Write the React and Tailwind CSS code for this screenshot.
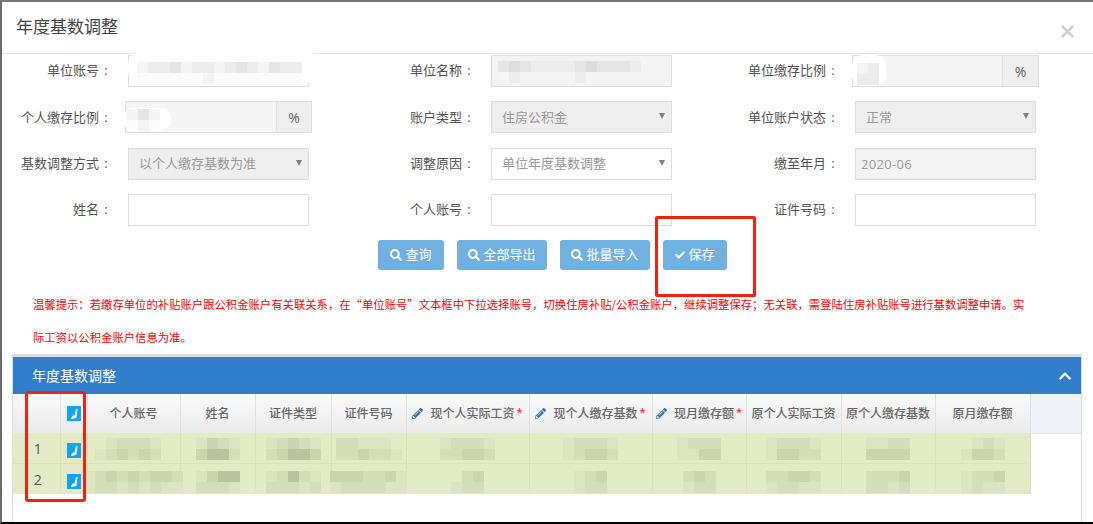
import React from 'react';
import { FaSearch, FaCheck, FaPencilAlt, FaChevronUp } from 'react-icons/fa';

const FONT = "font-['Open_Sans','Noto_Sans_CJK_SC',sans-serif]";

const GREEN = { 0: 'bg-[#e2ebc6]', 1: 'bg-[#dbe4c0]', 2: 'bg-[#d3ddb9]', 3: 'bg-[#cad4b1]', 4: 'bg-[#b9c3a2]' };
const GREY = { 0: 'bg-[#fbfbfb]', 1: 'bg-[#f4f4f4]', 2: 'bg-[#ececec]', 3: 'bg-[#e5e5e5]', 4: 'bg-[#dcdcdc]' };

function Mosaic({ rows, tones = GREEN }) {
  return (
    <div className="flex flex-col">
      {rows.map((row, i) => (
        <div key={i} className="flex">
          {row.split('').map((c, j) => (
            <div key={j} className={`h-[11px] w-[11px] shrink-0 ${tones[c]}`} />
          ))}
        </div>
      ))}
    </div>
  );
}

function Caret() {
  return (
    <svg className="pointer-events-none absolute right-[7px] top-[12px]" width="6" height="6" viewBox="0 0 6 6">
      <path d="M0 0h6L3 6z" fill="#808080" />
    </svg>
  );
}

function Field({ label, children }) {
  return (
    <div className="flex h-[32px] items-center">
      <label className="flex w-[111px] shrink-0 justify-end whitespace-nowrap text-[13px] text-[#555]">
        {label}
        <span className="w-[14px] text-center">:</span>
      </label>
      <div className="relative ml-[15px] h-[32px] w-[181px] shrink-0">{children}</div>
    </div>
  );
}

function TextBox({ value = '', muted }) {
  return (
    <input
      readOnly
      value={value}
      className={`h-full w-full border border-[#ddd] pl-[5px] text-[13px] tracking-[0.3px] text-[#999] outline-none ${muted ? 'bg-[#f3f3f3]' : 'bg-white'}`}
    />
  );
}

function SelectBox({ value, enabled }) {
  return (
    <>
      <div className={`flex h-full w-full items-center border border-[#ddd] px-[10px] text-[13px] text-[#999] ${enabled ? 'bg-white' : 'bg-[#eeeeee]'}`}>
        {value}
      </div>
      <Caret />
    </>
  );
}

function PercentBox({ children, addonWidth }) {
  return (
    <div className="absolute -left-[3px] top-0 flex h-full w-[187px] border border-[#ddd] bg-[#f5f5f5]">
      <div className="relative flex-1">{children}</div>
      <div className={`flex items-center justify-center border-l border-[#ddd] bg-[#eeeeee] text-[14px] text-[#666] ${addonWidth}`}>%</div>
    </div>
  );
}

function ActionButton({ icon, children, width }) {
  return (
    <button className={`flex h-[30px] items-center justify-center gap-[3px] rounded-[3px] bg-[#6fb1e0] text-[13px] text-white ${width}`}>
      {icon}
      {children}
    </button>
  );
}

function Check() {
  return (
    <div className="flex h-[15px] w-[14px] items-center justify-center bg-[#12a5f4]">
      <svg width="14" height="15" viewBox="0 0 14 15">
        <path d="M4 12 L6 9.5 L7.5 9.5 L9 3 L10.5 3 L9.5 11.5 L7 12.5 L4.5 13 Z" fill="#fff" />
      </svg>
    </div>
  );
}

function HeadCell({ children, edit, required }) {
  return (
    <th className="h-[39px] whitespace-nowrap border-r border-[#e0e0e0] bg-gradient-to-b from-[#f9f9f9] to-[#ebebeb] p-0 text-center text-[12px] font-medium text-[#666]">
      <div className="flex items-center justify-center">
        {edit && <FaPencilAlt className="mr-[7px] text-[11px] text-[#337ab7]" />}
        {children}
        {required && <span className="ml-[2px] -mt-[3px] text-[11px] text-[#f00]">*</span>}
      </div>
    </th>
  );
}

const ROW_PATCHES = [
  [
    ['0122210', '1232320'],
    ['1321', '3442'],
    ['12321', '23443'],
    ['221110', '223221'],
    ['12221', '22332'],
    ['12221', '12332'],
    ['1222', '1133'],
    ['12221', '13322'],
    ['1122', '3333'],
    ['0121', '1332'],
  ],
  [
    ['123232332', '122121211'],
    ['1344', '2221'],
    ['12421', '22212'],
    ['3332231', '1222211'],
    ['023', '122'],
    ['123', '122'],
    ['232', '122'],
    ['22332', '12211'],
    ['2223', '2212'],
    ['1223', '1211'],
  ],
];

function DataRow({ no, patches, last }) {
  const td = `border-r border-[#d8e1bc] p-0 ${last ? 'h-[31px]' : 'h-[30px] border-b'}`;
  return (
    <tr className="bg-[#e2ebc6]">
      <td className={`${td} pt-[2px] text-center text-[14px] text-[#555]`}>
        <span className="ml-[3px]">{no}</span>
      </td>
      <td className={td}>
        <div className="flex justify-center pt-[5px]"><Check /></div>
      </td>
      {patches.map((rows, i) => (
        <td key={i} className={td}>
          <div className={`flex justify-center ${last ? 'pt-[7px]' : 'pt-[3px]'}`}>
            <Mosaic rows={rows} />
          </div>
        </td>
      ))}
    </tr>
  );
}

export default function App() {
  return (
    <div className={`relative h-[524px] w-[1093px] overflow-hidden border-b-2 border-l-2 border-t-2 border-b-black border-l-[#6b6b6b] border-t-[#777] bg-white ${FONT}`}>
      {/* header */}
      <div className="flex h-[52px] items-center justify-between border-b border-[#e5e5e5] pl-[14px] pr-[18px]">
        <h4 className="-mt-[2px] text-[17px] font-normal text-[#444]">年度基数调整</h4>
        <svg className="mt-[8px]" width="15" height="15" viewBox="0 0 16 16">
          <path d="M2 2 14 14M14 2 2 14" stroke="#cfcfcf" strokeWidth="3" />
        </svg>
      </div>

      {/* form */}
      <div className="grid grid-cols-[363px_364px_363px] gap-y-[14.4px] pt-[1px]">
        <Field label="单位账号">
          <TextBox />
          <div className="absolute -top-[3px] left-0 h-[31px] w-[192px] rounded-[12px] bg-white" />
          <div className="absolute left-[9px] top-[7px]">
            <Mosaic tones={GREY} rows={['122312212321322', '000000100000000']} />
          </div>
        </Field>
        <Field label="单位名称">
          <TextBox muted />
          <div className="absolute left-[7px] top-[6px]">
            <Mosaic tones={{ ...GREY, 0: 'bg-[#f3f3f3]' }} rows={['3432222343332', '1211111211111']} />
          </div>
        </Field>
        <Field label="单位缴存比例">
          <PercentBox addonWidth="w-[36px]">
            <div className="absolute -top-[1px] left-[-1px] h-[31px] w-[34px] rounded-[10px] bg-white" />
            <div className="absolute left-[4px] top-[7px]">
              <Mosaic tones={GREY} rows={['12', '22']} />
            </div>
          </PercentBox>
        </Field>

        <Field label="个人缴存比例">
          <PercentBox addonWidth="w-[35px]">
            <div className="absolute left-[-3px] top-[6px] h-[22px] w-[48px] rounded-[10px] bg-white" />
            <div className="absolute left-[1px] top-[7px]">
              <Mosaic tones={GREY} rows={['131', '010']} />
            </div>
          </PercentBox>
        </Field>
        <Field label="账户类型">
          <SelectBox value="住房公积金" />
        </Field>
        <Field label="单位账户状态">
          <SelectBox value="正常" />
        </Field>

        <Field label="基数调整方式">
          <SelectBox value="以个人缴存基数为准" />
        </Field>
        <Field label="调整原因">
          <SelectBox value="单位年度基数调整" enabled />
        </Field>
        <Field label="缴至年月">
          <TextBox value="2020-06" muted />
        </Field>

        <Field label="姓名">
          <TextBox />
        </Field>
        <Field label="个人账号">
          <TextBox />
        </Field>
        <Field label="证件号码">
          <TextBox />
        </Field>
      </div>

      {/* actions */}
      <div className="mt-[14px] flex gap-[13px] pl-[376px]">
        <ActionButton width="w-[66px]" icon={<FaSearch className="text-[12px]" />}>查询</ActionButton>
        <ActionButton width="w-[90px]" icon={<FaSearch className="text-[12px]" />}>全部导出</ActionButton>
        <ActionButton width="w-[90px]" icon={<FaSearch className="text-[12px]" />}>批量导入</ActionButton>
        <ActionButton width="w-[64px]" icon={<FaCheck className="text-[10px]" />}>保存</ActionButton>
      </div>

      {/* tip */}
      <div className="mt-[18px] pl-[31px] font-['Noto_Sans_CJK_SC',sans-serif] text-[11.35px] leading-[33px] text-[#f00]">
        <p className="whitespace-nowrap">温馨提示：若缴存单位的补贴账户跟公积金账户有关联关系，在“单位账号”文本框中下拉选择账号，切换住房补贴/公积金账户，继续调整保存；无关联，需登陆住房补贴账号进行基数调整申请。实</p>
        <p className="whitespace-nowrap">际工资以公积金账户信息为准。</p>
      </div>

      {/* panel */}
      <div className="ml-[10px] h-[170px] w-[1070px] border-x border-t-[3px] border-[#dddddd]">
        <div className="flex h-[37px] items-center justify-between bg-[#317ecb] pl-[19px] pr-[9px] text-white">
          <span className="text-[14px]">年度基数调整</span>
          <FaChevronUp className="text-[14px]" />
        </div>
        <table className="w-[1068px] table-fixed border-collapse">
          <colgroup>
            <col className="w-[47px]" />
            <col className="w-[27px]" />
            <col className="w-[93px]" />
            <col className="w-[75px]" />
            <col className="w-[76px]" />
            <col className="w-[75px]" />
            <col className="w-[123px]" />
            <col className="w-[123px]" />
            <col className="w-[94px]" />
            <col className="w-[95px]" />
            <col className="w-[94px]" />
            <col className="w-[95px]" />
            <col className="w-[51px]" />
          </colgroup>
          <thead>
            <tr>
              <HeadCell />
              <HeadCell><Check /></HeadCell>
              <HeadCell>个人账号</HeadCell>
              <HeadCell>姓名</HeadCell>
              <HeadCell>证件类型</HeadCell>
              <HeadCell>证件号码</HeadCell>
              <HeadCell edit required>现个人实际工资</HeadCell>
              <HeadCell edit required>现个人缴存基数</HeadCell>
              <HeadCell edit required>现月缴存额</HeadCell>
              <HeadCell>原个人实际工资</HeadCell>
              <HeadCell>原个人缴存基数</HeadCell>
              <HeadCell>原月缴存额</HeadCell>
              <th className="border-b border-[#e3e3e3] bg-[#eff2f7] p-0" />
            </tr>
          </thead>
          <tbody>
            <DataRow no={1} patches={ROW_PATCHES[0]} />
            <DataRow no={2} patches={ROW_PATCHES[1]} last />
          </tbody>
        </table>
      </div>

      {/* red annotation boxes */}
      <div className="absolute left-[653px] top-[214px] h-[81px] w-[101px] rounded-[2px] border-[3px] border-[#f5200f]" />
      <div className="absolute left-[23px] top-[389px] h-[111px] w-[61px] rounded-[3px] border-[3px] border-[#f5200f]" />
    </div>
  );
}
